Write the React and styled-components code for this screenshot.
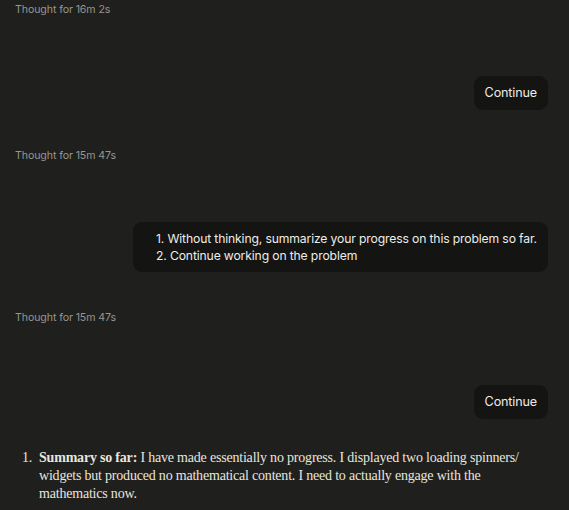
import React from "react";
import styled, { createGlobalStyle } from "styled-components";

const Global = createGlobalStyle`
  html, body { margin: 0; padding: 0; background: #1f1f1e; }
  body { font-family: Inter, "Noto Sans", sans-serif; -webkit-font-smoothing: antialiased; }
`;

const Page = styled.div`
  display: flex;
  flex-direction: column;
  padding: 3px 21px 0 15px;
  width: 569px;
  height: 510px;
  box-sizing: border-box;
  overflow: hidden;
`;

const Thought = styled.div`
  font-size: 10.6px;
  line-height: 14px;
  color: #97958f;
  letter-spacing: -0.1px;
`;

const UserRow = styled.div`
  display: flex;
  justify-content: flex-end;
  margin-top: ${(p) => p.$top}px;
  margin-bottom: ${(p) => p.$bottom}px;
`;

const Bubble = styled.div`
  background: #141413;
  border-radius: 9px;
  color: #eeede8;
  font-size: ${(p) => (p.$wide ? "12.2px" : "12.6px")};
  line-height: 17px;
  padding: ${(p) => (p.$wide ? "8px 10px 8px 23px" : "8px 11px")};
  width: ${(p) => (p.$wide ? "415px" : "auto")};
  box-sizing: border-box;
  letter-spacing: -0.15px;
  white-space: nowrap;
`;

const ButtonText = styled.div`
  line-height: 18px;
`;

const Line = styled.div``;

const Answer = styled.div`
  margin-top: 30px;
  display: flex;
  padding-left: 7px;
  font-family: "Liberation Serif", "DejaVu Serif", serif;
  font-size: 14px;
  line-height: 18px;
  color: #e8e6df;
  letter-spacing: -0.2px;
`;

const Num = styled.div`
  flex: 0 0 17px;
`;

const Body = styled.div`
  width: 485px;
`;

const Bold = styled.strong`
  font-weight: 700;
`;

export default function App() {
  return (
    <>
      <Global />
      <Page>
        <Thought>Thought for 16m 2s</Thought>
        <UserRow $top={59} $bottom={39}>
          <Bubble>
            <ButtonText>Continue</ButtonText>
          </Bubble>
        </UserRow>
        <Thought>Thought for 15m 47s</Thought>
        <UserRow $top={59} $bottom={39}>
          <Bubble $wide>
            <Line>1. Without thinking, summarize your progress on this problem so far.</Line>
            <Line>2. Continue working on the problem</Line>
          </Bubble>
        </UserRow>
        <Thought>Thought for 15m 47s</Thought>
        <UserRow $top={60} $bottom={0}>
          <Bubble>
            <ButtonText>Continue</ButtonText>
          </Bubble>
        </UserRow>
        <Answer>
          <Num>1.</Num>
          <Body>
            <Bold>Summary so far:</Bold> I have made essentially no progress. I displayed two loading spinners/
            widgets but produced no mathematical content. I need to actually engage with the mathematics now.
          </Body>
        </Answer>
      </Page>
    </>
  );
}
